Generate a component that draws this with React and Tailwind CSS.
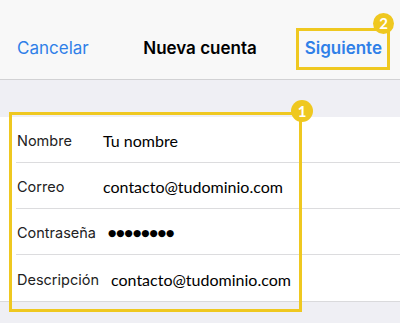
import React from "react";

const rows = [
  { label: "Nombre", value: "Tu nombre" },
  { label: "Correo", value: "contacto@tudominio.com" },
  { label: "Contraseña", value: "●●●●●●●●", dots: true },
  { label: "Descripción", value: "contacto@tudominio.com" },
];

const Badge = ({ n, className }) => (
  <div
    className={`absolute flex items-center justify-center rounded-full bg-[#efc820] text-white font-bold text-[15px] leading-none ${className}`}
    style={{ fontFamily: "Lato, sans-serif" }}
  >
    {n}
  </div>
);

export default function App() {
  return (
    <div
      className="relative w-[400px] h-[323px] overflow-hidden bg-[#efeff4]"
      style={{ fontFamily: "Inter, 'Noto Sans', sans-serif" }}
    >
      {/* nav bar */}
      <div className="h-[80px] pt-[18px] bg-[#f8f8f8] border-b border-[#d2d2d4] grid grid-cols-[1fr_auto_1fr] items-center px-[17px]">
        <span className="text-[17px] text-[#2f80e8]">Cancelar</span>
        <span className="text-[17px] font-semibold text-black">Nueva cuenta</span>
        <span className="text-[17px] font-semibold text-[#2f80e8] justify-self-end pr-px">Siguiente</span>
      </div>

      {/* form */}
      <div className="mt-[37px] bg-white border-b border-[#dadadc]">
        {rows.map((r, i) => (
          <div key={r.label} className="pl-[16px]">
            <div
              className={`h-[46px] pt-[3px] flex items-center gap-[12px] pl-px ${
                i < rows.length - 1 ? "border-b border-[#dcdcde]" : ""
              }`}
            >
              <span className="min-w-[74px] text-[14.5px] text-[#222]">{r.label}</span>
              {r.dots ? (
                <span
                  className="text-[9.5px] text-black leading-none"
                  style={{ fontFamily: "'DejaVu Sans', sans-serif" }}
                >
                  {r.value}
                </span>
              ) : (
                <span
                  className="text-[16px] text-black"
                  style={{ fontFamily: "Lato, 'Open Sans', sans-serif" }}
                >
                  {r.value}
                </span>
              )}
            </div>
          </div>
        ))}
      </div>

      {/* callout 1 */}
      <div className="absolute left-[9px] top-[112px] w-[293px] h-[200px] border-[3px] border-[#efc820]" />
      <Badge n="1" className="left-[291px] top-[100px] w-[22px] h-[22px]" />

      {/* callout 2 */}
      <div className="absolute left-[296px] top-[28px] w-[94px] h-[42px] border-[3px] border-[#efc820]" />
      <Badge n="2" className="left-[373px] top-[13px] w-[21px] h-[21px]" />
    </div>
  );
}
